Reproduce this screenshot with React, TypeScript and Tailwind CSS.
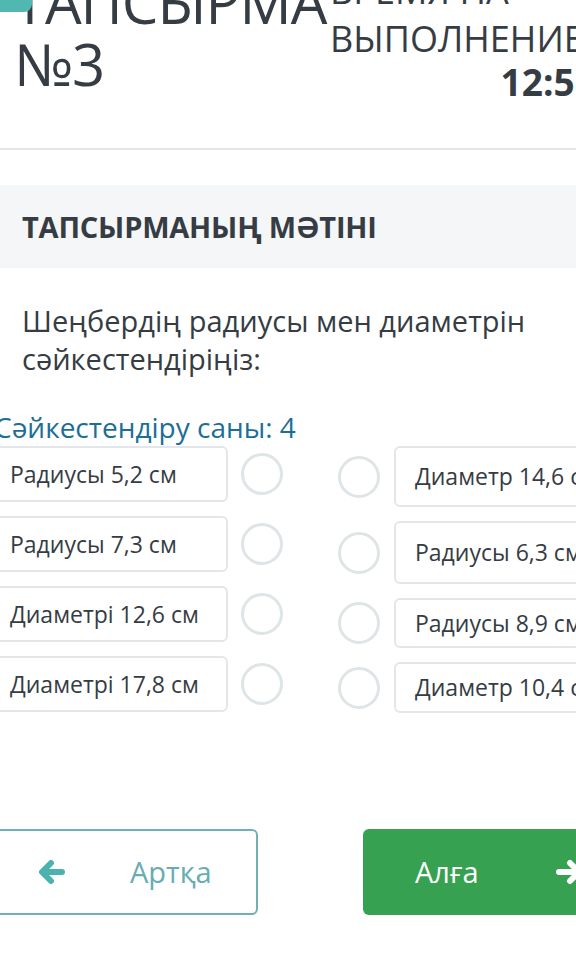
import React from 'react';

const leftItems = ['Радиусы 5,2 см', 'Радиусы 7,3 см', 'Диаметрі 12,6 см', 'Диаметрі 17,8 см'];
const rightItems = [
  { text: 'Диаметр 14,6 см', h: 'h-[61px]' },
  { text: 'Радиусы 6,3 см', h: 'h-[63px]' },
  { text: 'Радиусы 8,9 см', h: 'h-[50px]' },
  { text: 'Диаметр 10,4 см', h: 'h-[51px]' },
];

function Circle() {
  return <div className="w-[42px] h-[42px] shrink-0 rounded-full border-[3px] border-[#dfe4e7] bg-white" />;
}

function Arrow({ dir, className }: { dir: 'left' | 'right'; className?: string }) {
  return (
    <svg
      viewBox="0 0 28 26"
      width={28}
      height={26}
      className={className}
      style={{ transform: dir === 'right' ? 'scaleX(-1)' : undefined }}
    >
      <path
        d="M13 4 L4 13 L13 22 M5 13 H24"
        fill="none"
        stroke="currentColor"
        strokeWidth={6}
        strokeLinecap="round"
        strokeLinejoin="round"
      />
    </svg>
  );
}

export default function App() {
  return (
    <div
      className="relative w-[576px] h-[980px] overflow-hidden bg-white text-[#363c43]"
      style={{ fontFamily: '"Open Sans", "Noto Sans", sans-serif' }}
    >
      {/* teal tab at the top */}
      <div className="absolute left-0 top-0 z-10 w-[32px] h-[12px] rounded-br-[8px] bg-[#50b8b0]" />

      {/* Header */}
      <div className="flex items-start -mt-[29px] h-[177px] w-[660px]">
        <div className="ml-[14px] w-[316px] text-[58px] leading-[62px] tracking-[-1px]">
          <div>ТАПСЫРМА</div>
          <div>№3</div>
        </div>
        <div className="flex flex-col -mt-[4px]">
          <div className="text-[36px] leading-[48px]">ВРЕМЯ НА</div>
          <div className="text-[36px] leading-[48px]">ВЫПОЛНЕНИЕ</div>
          <div className="self-end -mt-[3px] -mr-[12px] text-[37px] leading-[44px] font-bold">12:51</div>
        </div>
      </div>
      <div className="h-[2px] bg-[#e4e6e8]" />

      {/* Section title */}
      <div className="mt-[35px] h-[83px] bg-[#f4f6f7] flex items-center px-[22px]">
        <span className="text-[29px] font-bold tracking-[-0.2px]">ТАПСЫРМАНЫҢ МӘТІНІ</span>
      </div>

      {/* Question */}
      <div className="mt-[34px] px-[22px] text-[29px] leading-[38px]">
        Шеңбердің радиусы мен диаметрін сәйкестендіріңіз:
      </div>
      <div className="mt-[32px] -ml-[6px] text-[28px] leading-[34px] text-[#1d6e97]">
        Сәйкестендіру саны: 4
      </div>

      {/* Matching columns */}
      <div className="mt-[2px] flex items-start w-[640px]">
        <div className="flex flex-col gap-[14px] -ml-[12px]">
          {leftItems.map((t) => (
            <div key={t} className="flex items-center">
              <div className="w-[240px] h-[56px] rounded-[6px] border-[2px] border-[#e3e7ea] bg-white flex items-center pl-[20px] text-[23px]">
                {t}
              </div>
              <div className="ml-[13px]">
                <Circle />
              </div>
            </div>
          ))}
        </div>
        <div className="flex flex-col gap-[14px] ml-[55px]">
          {rightItems.map((it) => (
            <div key={it.text} className="flex items-center">
              <Circle />
              <div
                className={`ml-[14px] w-[230px] ${it.h} rounded-[6px] border-[2px] border-[#e3e7ea] bg-white flex items-center pl-[19px] text-[23px] whitespace-nowrap`}
              >
                {it.text}
              </div>
            </div>
          ))}
        </div>
      </div>

      {/* Navigation buttons */}
      <div className="mt-[116px] flex items-center w-[700px]">
        <button className="-ml-[12px] w-[270px] h-[86px] rounded-[6px] border-[2px] border-[#72b0b7] bg-white flex items-center">
          <Arrow dir="left" className="ml-[48px] text-[#4cb2b0]" />
          <span className="ml-[64px] text-[29px] text-[#68acb4]">Артқа</span>
        </button>
        <button className="ml-[105px] w-[260px] h-[86px] rounded-[6px] bg-[#36a251] flex items-center">
          <span className="ml-[52px] text-[29px] text-white">Алға</span>
          <Arrow dir="right" className="ml-[76px] text-white" />
        </button>
      </div>
    </div>
  );
}
